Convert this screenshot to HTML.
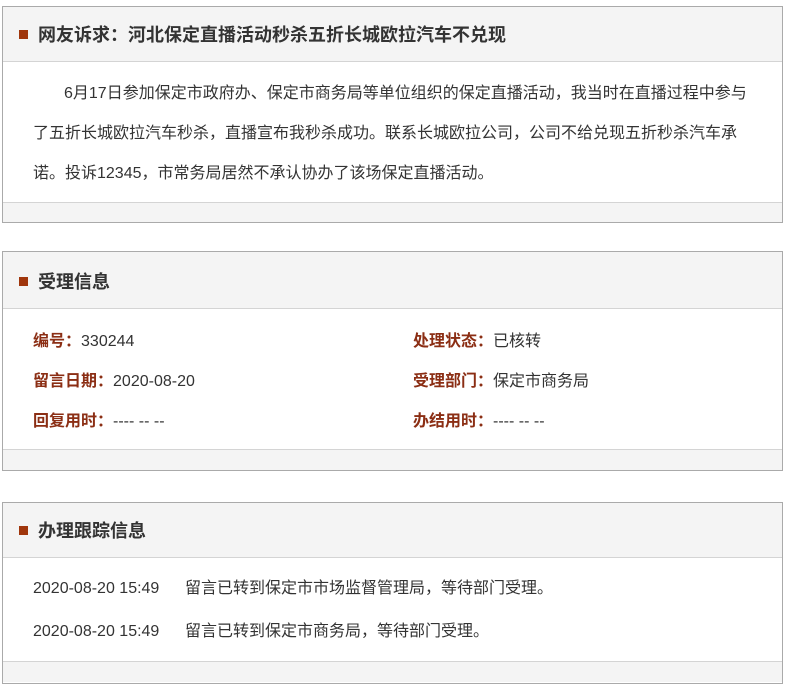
<!DOCTYPE html>
<html><head><meta charset="utf-8"><style>
body{margin:0;background:#fff;font-family:"Liberation Sans","Noto Sans CJK SC",sans-serif;color:#333;}
.box{position:absolute;left:2px;width:779px;border:1px solid #aaa;background:#fff;overflow:hidden;}
.hd{height:54px;background:#f4f4f4;border-bottom:1px solid #d4d4d4;position:relative;}
.hd i{position:absolute;left:16px;top:23px;width:9px;height:9px;background:#a0360c;}
.hd b{position:absolute;left:35px;top:0;line-height:56px;font-size:18px;color:#333;}
.ft{height:20px;background:#f4f4f4;border-top:1px solid #d4d4d4;}
.txt{padding:12px 28px 0 30px;height:128px;font-size:16px;line-height:40px;text-indent:31px;}
.row{position:absolute;font-size:16px;line-height:24px;white-space:nowrap;}
.row em{font-style:normal;font-weight:bold;color:#8b2e14;}
</style></head><body>
<div class="box" style="top:6px;height:215px">
<div class="hd"><i></i><b>网友诉求：河北保定直播活动秒杀五折长城欧拉汽车不兑现</b></div>
<div class="txt">6月17日参加保定市政府办、保定市商务局等单位组织的保定直播活动，我当时在直播过程中参与了五折长城欧拉汽车秒杀，直播宣布我秒杀成功。联系长城欧拉公司，公司不给兑现五折秒杀汽车承诺。投诉12345，市常务局居然不承认协办了该场保定直播活动。</div>
<div class="ft"></div>
</div>
<div class="box" style="top:251px;height:218px">
<div class="hd" style="height:56px"><i style="top:25px"></i><b style="line-height:60px">受理信息</b></div>
<div style="position:relative;height:140px">
<div class="row" style="left:30px;top:21px"><em>编号：</em>330244</div>
<div class="row" style="left:410px;top:21px"><em>处理状态：</em>已核转</div>
<div class="row" style="left:30px;top:61px"><em>留言日期：</em>2020-08-20</div>
<div class="row" style="left:410px;top:61px"><em>受理部门：</em>保定市商务局</div>
<div class="row" style="left:30px;top:101px"><em>回复用时：</em>---- -- --</div>
<div class="row" style="left:410px;top:101px"><em>办结用时：</em>---- -- --</div>
</div>
<div class="ft"></div>
</div>
<div class="box" style="top:502px;height:180px">
<div class="hd"><i></i><b>办理跟踪信息</b></div>
<div style="position:relative;height:103px">
<div class="row" style="left:30px;top:19px">2020-08-20 15:49</div>
<div class="row" style="left:182px;top:19px">留言已转到保定市市场监督管理局，等待部门受理。</div>
<div class="row" style="left:30px;top:62px">2020-08-20 15:49</div>
<div class="row" style="left:182px;top:62px">留言已转到保定市商务局，等待部门受理。</div>
</div>
<div class="ft"></div>
</div>
</body></html>
